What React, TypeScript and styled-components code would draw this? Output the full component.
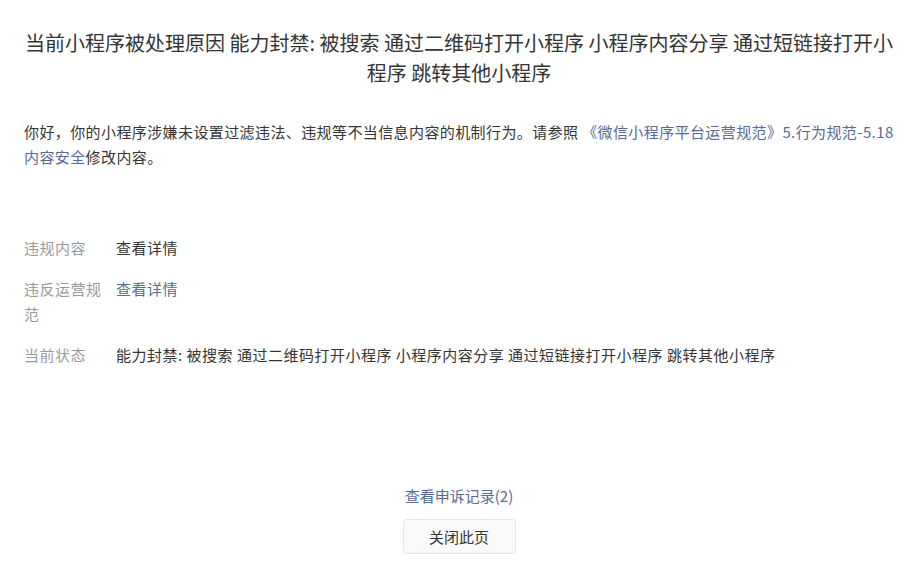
import React from 'react';
import styled, { createGlobalStyle } from 'styled-components';

const GlobalStyle = createGlobalStyle`
	html, body {
		margin: 0;
		padding: 0;
		background: #ffffff;
	}
	body {
		font-family: 'Noto Sans CJK SC', 'Noto Sans', sans-serif;
		color: #353535;
	}
`;

const Page = styled.div`
	display: flex;
	flex-direction: column;
	min-height: 100vh;
	box-sizing: border-box;
	padding: 28px 24px 31px;
`;

const Title = styled.h2`
	margin: 0;
	font-size: 20px;
	font-weight: 400;
	line-height: 30px;
	text-align: center;
	color: #353535;
`;

const Notice = styled.p`
	margin: 31px 0 0;
	font-size: 15px;
	line-height: 25px;
	letter-spacing: 0.4px;
	color: #353535;
`;

const Link = styled.a`
	color: #576b95;
	text-decoration: none;
	cursor: pointer;
`;

const NoWrap = styled.span`
	white-space: nowrap;
`;

const InfoList = styled.dl`
	margin: 66px 0 0;
	display: flex;
	flex-direction: column;
	gap: 16px;
`;

const InfoRow = styled.div`
	display: flex;
	align-items: flex-start;
	font-size: 15px;
	line-height: 25px;
	letter-spacing: 0.5px;
`;

const Label = styled.dt`
	flex: 0 0 80px;
	margin-right: 12px;
	color: #9a9a9a;
`;

const Value = styled.dd<{ $link?: boolean }>`
	margin: 0;
	flex: 1;
	color: ${(p) => (p.$link ? '#576b95' : '#353535')};
`;

const Footer = styled.div`
	margin-top: auto;
	display: flex;
	flex-direction: column;
	align-items: center;
	gap: 11px;
`;

const FooterLink = styled(Link)`
	font-size: 15px;
	line-height: 25px;
`;

const CloseButton = styled.button`
	width: 113px;
	height: 35px;
	padding: 0;
	border: 1px solid #e6e6e6;
	border-radius: 3px;
	background: #f9f9f9;
	font-family: inherit;
	font-size: 15px;
	color: #353535;
	cursor: pointer;
`;

const rows = [
	{ label: '违规内容', value: '查看详情' },
	{ label: '违反运营规范', value: '查看详情', link: true },
	{ label: '当前状态', value: '能力封禁: 被搜索 通过二维码打开小程序 小程序内容分享 通过短链接打开小程序 跳转其他小程序' },
];

const App: React.FC = () => {
	return (
		<>
			<GlobalStyle />
			<Page>
				<Title>当前小程序被处理原因 能力封禁: 被搜索 通过二维码打开小程序 小程序内容分享 通过短链接打开小程序 跳转其他小程序</Title>
				<Notice>
					你好，你的小程序涉嫌未设置过滤违法、违规等不当信息内容的机制行为。请参照{' '}
					<Link>
						《微信小程序平台运营规范》<NoWrap>5.行为规范-5.18</NoWrap> 内容安全
					</Link>
					修改内容。
				</Notice>
				<InfoList>
					{rows.map((row) => (
						<InfoRow key={row.label}>
							<Label>{row.label}</Label>
							<Value $link={row.link}>{row.value}</Value>
						</InfoRow>
					))}
				</InfoList>
				<Footer>
					<FooterLink>查看申诉记录(2)</FooterLink>
					<CloseButton type="button">关闭此页</CloseButton>
				</Footer>
			</Page>
		</>
	);
};

export default App;
